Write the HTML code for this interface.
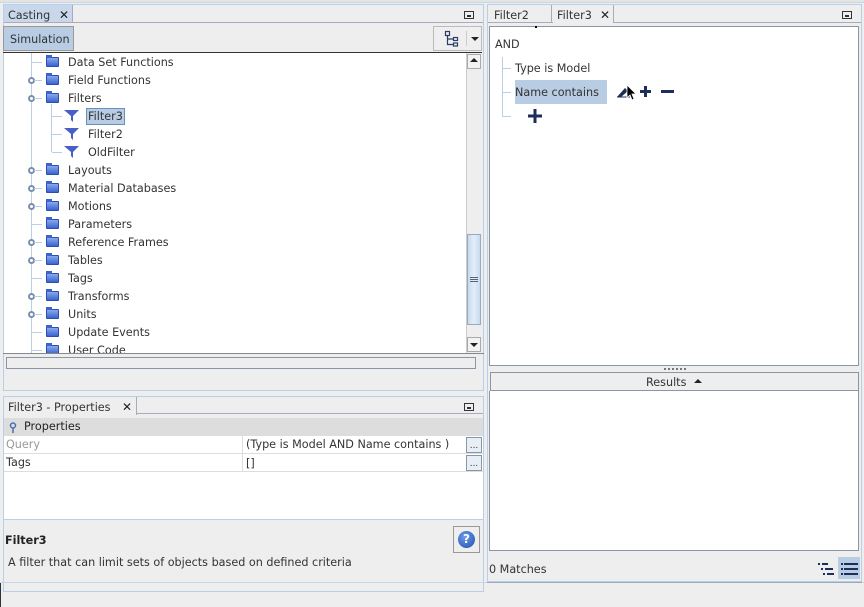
<!DOCTYPE html>
<html><head><style>
*{margin:0;padding:0;box-sizing:border-box}
body{width:864px;height:607px;background:#eeeeee;font-family:"DejaVu Sans","Liberation Sans",sans-serif;font-size:11px;color:#333;position:relative;overflow:hidden}
.a{position:absolute}
.t{position:absolute;white-space:nowrap;line-height:14px;margin-top:1px;font-size:11.2px}
.fold{position:absolute;width:13px;height:10px;background:linear-gradient(#8aa8ec,#3a64d0);border:1px solid #2a4fb0;border-radius:1px}
.fold:before{content:"";position:absolute;left:-1px;top:-3px;width:6px;height:3px;background:#3a64d0}
.h{position:absolute;width:1px;background:#b8cfe5}
.hl{position:absolute;height:1px;background:#b8cfe5}
.knob{position:absolute;width:7px;height:7px;border:2px solid #7a8fb0;border-radius:50%;background:#fff}
</style></head><body>
<div class="a" style="left:0;top:0;width:864px;height:3px;background:#e4e4e4;border-bottom:1px solid #c8d6e5"></div>
<div class="a" style="left:3px;top:4px;width:481px;height:387px;border:1px solid #b8cfe5;background:#eee"></div>
<div class="a" style="left:4px;top:5px;width:69px;height:18px;background:#c8d8ea;border-right:1px solid #aab"></div>
<div class="t" style="left:8px;top:8px">Casting</div>
<div class="t" style="left:59px;top:7px;font-size:12px;color:#222">✕</div>
<div class="a" style="left:4px;top:22px;width:479px;height:1px;background:#aab"></div>
<div class="a" style="left:464px;top:11px;width:10px;height:8px;border:1px solid #333"><div class="a" style="left:2px;top:3px;width:4px;height:2px;background:#333"></div></div>
<div class="a" style="left:3px;top:26px;width:71px;height:25px;background:#b8cde4;border:1px solid #999"></div>
<div class="t" style="left:10px;top:32px">Simulation</div>
<div class="a" style="left:433px;top:26px;width:49px;height:25px;border:1px solid #bbb;background:#efefef"></div>
<svg class="a" style="left:444px;top:30px" width="16" height="18"><g fill="none" stroke="#2a3d66" stroke-width="1.2"><rect x="1.5" y="1.5" width="4" height="4"/><rect x="9.5" y="7.5" width="4" height="3"/><rect x="9.5" y="13" width="4" height="3"/><path d="M3.5 5.5V14.5H9.5M3.5 9H9.5"/></g></svg>
<div class="a" style="left:466px;top:31px;width:1px;height:15px;background:#ccc"></div>
<div class="a" style="left:471px;top:37px;border:4px solid transparent;border-top:4px solid #222"></div>
<div class="a" style="left:3px;top:52px;width:479px;height:1px;background:#333"></div>
<div class="a" style="left:4px;top:53px;width:462px;height:300px;background:#fff"></div>
<div class="a" style="left:466px;top:53px;width:16px;height:300px;background:#eee;border-left:1px solid #ccc"></div>
<div class="a" style="left:467px;top:54px;width:14px;height:15px;border:1px solid #aaa;background:#f2f2f2"></div>
<div class="a" style="left:470px;top:58px;border:4px solid transparent;border-bottom:4px solid #222;border-top:0"></div>
<div class="a" style="left:467px;top:234px;width:14px;height:91px;background:linear-gradient(90deg,#c8d9ee,#e4eefa,#c8d9ee);border:1px solid #9ab"></div>
<div class="a" style="left:470px;top:277px;width:8px;height:5px;border-top:1px solid #567;border-bottom:1px solid #567"></div>
<div class="a" style="left:470px;top:279px;width:8px;height:1px;background:#567"></div>
<div class="a" style="left:467px;top:337px;width:14px;height:15px;border:1px solid #aaa;background:#f2f2f2"></div>
<div class="a" style="left:470px;top:343px;border:4px solid transparent;border-top:4px solid #222;border-bottom:0"></div>
<div class="h" style="left:31px;top:53px;height:300px"></div>
<div class="h" style="left:51px;top:104px;height:48px"></div>
<div class="hl" style="left:52px;top:116px;width:10px"></div>
<div class="hl" style="left:52px;top:134px;width:10px"></div>
<div class="hl" style="left:52px;top:152px;width:10px"></div>
<div class="a" style="left:86px;top:108px;width:39px;height:17px;background:#b8cde4;border:1px solid #6a8ec0"></div>
<div class="a" style="left:3px;top:353px;width:481px;height:1px;background:#888"></div>
<div class="a" style="left:6px;top:357px;width:470px;height:12px;border:1px solid #8a96a4;background:#eee"></div>
<div class="a" style="left:3px;top:396px;width:481px;height:196px;border:1px solid #b8cfe5;background:#eee"></div>
<div class="a" style="left:4px;top:397px;width:133px;height:18px;background:#eee;border-right:1px solid #aab"></div>
<div class="t" style="left:8px;top:400px">Filter3 - Properties</div>
<div class="t" style="left:122px;top:399px;font-size:12px;color:#222">✕</div>
<div class="a" style="left:137px;top:413px;width:346px;height:1px;background:#aab"></div>
<div class="a" style="left:464px;top:403px;width:10px;height:8px;border:1px solid #333"><div class="a" style="left:2px;top:3px;width:4px;height:2px;background:#333"></div></div>
<div class="a" style="left:4px;top:418px;width:479px;height:18px;background:#ddd"></div>
<svg class="a" style="left:9px;top:422px" width="8" height="12"><circle cx="4" cy="3.5" r="2.5" fill="none" stroke="#4a6fb0" stroke-width="1.5"/><path d="M4 6V11" stroke="#4a6fb0" stroke-width="1.5"/></svg>
<div class="t" style="left:24px;top:419px;color:#222">Properties</div>
<div class="a" style="left:4px;top:436px;width:479px;height:83px;background:#fff"></div>
<div class="hl" style="left:4px;top:453px;width:479px;background:#ddd"></div>
<div class="hl" style="left:4px;top:471px;width:479px;background:#ddd"></div>
<div class="a" style="left:242px;top:436px;width:1px;height:36px;background:#ddd"></div>
<div class="t" style="left:6px;top:437px;color:#999">Query</div>
<div class="t" style="left:246px;top:437px">(Type is Model AND Name contains )</div>
<div class="t" style="left:6px;top:455px">Tags</div>
<div class="t" style="left:246px;top:456px">[]</div>
<div class="a" style="left:466px;top:437px;width:16px;height:16px;border:1px solid #8a96a4;background:#e8eef6;font-size:9px;text-align:center;line-height:16px">...</div>
<div class="a" style="left:466px;top:455px;width:16px;height:16px;border:1px solid #8a96a4;background:#e8eef6;font-size:9px;text-align:center;line-height:16px">...</div>
<div class="a" style="left:4px;top:519px;width:479px;height:2px;border-top:1px solid #b8cfe5"></div>
<div class="t" style="left:5px;top:533px;font-weight:bold;color:#222">Filter3</div>
<div class="t" style="left:8px;top:555px">A filter that can limit sets of objects based on defined criteria</div>
<div class="a" style="left:453px;top:526px;width:27px;height:27px;border:1px solid #999;background:#eee"></div>
<div class="a" style="left:458px;top:531px;width:17px;height:17px;border-radius:50%;background:radial-gradient(circle at 40% 35%,#6a9ae8,#2050b0);color:#fff;font-weight:bold;font-size:12px;text-align:center;line-height:17px">?</div>
<div class="a" style="left:0;top:582px;width:864px;height:1px;background:#c8d6e5"></div>
<div class="a" style="left:0;top:583px;width:1px;height:24px;background:#333"></div>
<div class="a" style="left:487px;top:4px;width:375px;height:578px;border:1px solid #b8cfe5;background:#eee"></div>
<div class="a" style="left:488px;top:5px;width:64px;height:18px;border-right:1px solid #aab"></div>
<div class="t" style="left:494px;top:8px">Filter2</div>
<div class="a" style="left:553px;top:5px;width:61px;height:18px;background:#eee;border-right:1px solid #aab"></div>
<div class="t" style="left:557px;top:8px">Filter3</div>
<div class="t" style="left:600px;top:7px;font-size:12px;color:#222">✕</div>
<div class="a" style="left:488px;top:22px;width:65px;height:1px;background:#aab"></div>
<div class="a" style="left:614px;top:22px;width:247px;height:1px;background:#aab"></div>
<div class="a" style="left:842px;top:11px;width:10px;height:8px;border:1px solid #333"><div class="a" style="left:2px;top:3px;width:4px;height:2px;background:#333"></div></div>
<div class="a" style="left:489px;top:26px;width:370px;height:340px;background:#fff;border:1px solid #8a96a4"></div>
<div class="a" style="left:535px;top:26px;width:2px;height:2px;background:#000"></div>
<div class="t" style="left:495px;top:37px">AND</div>
<div class="h" style="left:502px;top:57px;height:60px"></div>
<div class="hl" style="left:503px;top:68px;width:8px"></div>
<div class="hl" style="left:503px;top:92px;width:8px"></div>
<div class="hl" style="left:503px;top:116px;width:8px"></div>
<div class="t" style="left:515px;top:61px">Type is Model</div>
<div class="a" style="left:515px;top:80px;width:92px;height:24px;background:#b8cde4"></div>
<div class="t" style="left:515px;top:85px">Name contains</div>
<svg class="a" style="left:616px;top:83px" width="62" height="18"><path d="M1 14L9 5L12 8L5 14Z" fill="#1e2e5a"/><path d="M1 14H14" stroke="#1e2e5a" stroke-width="1"/><path d="M11 2V15L14 12L16 17L18 16L16 11H20Z" fill="#000" stroke="#fff" stroke-width=".8"/><path d="M24 8.5H35M29.5 3V14" stroke="#1e2e5a" stroke-width="3"/><path d="M45 8.5H58" stroke="#1e2e5a" stroke-width="3"/></svg>
<svg class="a" style="left:527px;top:108px" width="16" height="16"><path d="M1 8H15M8 1V15" stroke="#1e2e5a" stroke-width="3"/></svg>
<div class="a" style="left:664px;top:368px;width:22px;height:2px;border-top:2px dotted #777"></div>
<div class="a" style="left:490px;top:372px;width:369px;height:19px;background:#eee;border:1px solid #8a96a4"></div>
<div class="t" style="left:646px;top:375px">Results</div>
<div class="a" style="left:694px;top:379px;border:4px solid transparent;border-bottom:4px solid #223;border-top:0"></div>
<div class="a" style="left:489px;top:391px;width:370px;height:160px;background:#fff;border:1px solid #8a96a4;border-top:0"></div>
<div class="t" style="left:489px;top:562px">0 Matches</div>
<svg class="a" style="left:818px;top:561px" width="18" height="16"><g fill="#1e2e5a"><rect x="0" y="2" width="2" height="2"/><rect x="4" y="2" width="6" height="2"/><rect x="3" y="7" width="2" height="2"/><rect x="7" y="7" width="8" height="2"/><rect x="5" y="12" width="2" height="2"/><rect x="9" y="12" width="7" height="2"/></g></svg>
<div class="a" style="left:838px;top:557px;width:22px;height:22px;background:#b8cde4"></div>
<svg class="a" style="left:841px;top:561px" width="18" height="16"><g fill="#1e2e5a"><rect x="0" y="2" width="2" height="2"/><rect x="3" y="2" width="14" height="2"/><rect x="0" y="7" width="2" height="2"/><rect x="3" y="7" width="14" height="2"/><rect x="0" y="12" width="2" height="2"/><rect x="3" y="12" width="14" height="2"/></g></svg>
<div class="a" style="left:487px;top:582px;width:375px;height:1px;background:#9ab"></div>
<div class="hl" style="left:32px;top:62px;width:10px"></div><div class="fold" style="left:46px;top:57px"></div><div class="t" style="left:68px;top:55px">Data Set Functions</div>
<div class="knob" style="left:28px;top:77px"></div><div class="hl" style="left:34px;top:80px;width:8px"></div><div class="fold" style="left:46px;top:75px"></div><div class="t" style="left:68px;top:73px">Field Functions</div>
<div class="knob" style="left:28px;top:95px"></div><div class="hl" style="left:34px;top:98px;width:8px"></div><div class="fold" style="left:46px;top:93px"></div><div class="t" style="left:68px;top:91px">Filters</div>
<svg class="a" style="left:64px;top:109px" width="16" height="14"><path d="M0 1H15L9 7V13L7 11V7Z" fill="#4a5ec8"/></svg><div class="t" style="left:88px;top:109px">Filter3</div>
<svg class="a" style="left:64px;top:127px" width="16" height="14"><path d="M0 1H15L9 7V13L7 11V7Z" fill="#4a5ec8"/></svg><div class="t" style="left:88px;top:127px">Filter2</div>
<svg class="a" style="left:64px;top:145px" width="16" height="14"><path d="M0 1H15L9 7V13L7 11V7Z" fill="#4a5ec8"/></svg><div class="t" style="left:88px;top:145px">OldFilter</div>
<div class="knob" style="left:28px;top:167px"></div><div class="hl" style="left:34px;top:170px;width:8px"></div><div class="fold" style="left:46px;top:165px"></div><div class="t" style="left:68px;top:163px">Layouts</div>
<div class="knob" style="left:28px;top:185px"></div><div class="hl" style="left:34px;top:188px;width:8px"></div><div class="fold" style="left:46px;top:183px"></div><div class="t" style="left:68px;top:181px">Material Databases</div>
<div class="knob" style="left:28px;top:203px"></div><div class="hl" style="left:34px;top:206px;width:8px"></div><div class="fold" style="left:46px;top:201px"></div><div class="t" style="left:68px;top:199px">Motions</div>
<div class="hl" style="left:32px;top:224px;width:10px"></div><div class="fold" style="left:46px;top:219px"></div><div class="t" style="left:68px;top:217px">Parameters</div>
<div class="knob" style="left:28px;top:239px"></div><div class="hl" style="left:34px;top:242px;width:8px"></div><div class="fold" style="left:46px;top:237px"></div><div class="t" style="left:68px;top:235px">Reference Frames</div>
<div class="knob" style="left:28px;top:257px"></div><div class="hl" style="left:34px;top:260px;width:8px"></div><div class="fold" style="left:46px;top:255px"></div><div class="t" style="left:68px;top:253px">Tables</div>
<div class="hl" style="left:32px;top:278px;width:10px"></div><div class="fold" style="left:46px;top:273px"></div><div class="t" style="left:68px;top:271px">Tags</div>
<div class="knob" style="left:28px;top:293px"></div><div class="hl" style="left:34px;top:296px;width:8px"></div><div class="fold" style="left:46px;top:291px"></div><div class="t" style="left:68px;top:289px">Transforms</div>
<div class="knob" style="left:28px;top:311px"></div><div class="hl" style="left:34px;top:314px;width:8px"></div><div class="fold" style="left:46px;top:309px"></div><div class="t" style="left:68px;top:307px">Units</div>
<div class="hl" style="left:32px;top:332px;width:10px"></div><div class="fold" style="left:46px;top:327px"></div><div class="t" style="left:68px;top:325px">Update Events</div>
<div class="a" style="left:4px;top:340px;width:462px;height:13px;overflow:hidden"><div class="hl" style="left:28px;top:10px;width:10px"></div><div class="fold" style="left:42px;top:5px"></div><div class="t" style="left:64px;top:3px">User Code</div></div>
</body></html>
